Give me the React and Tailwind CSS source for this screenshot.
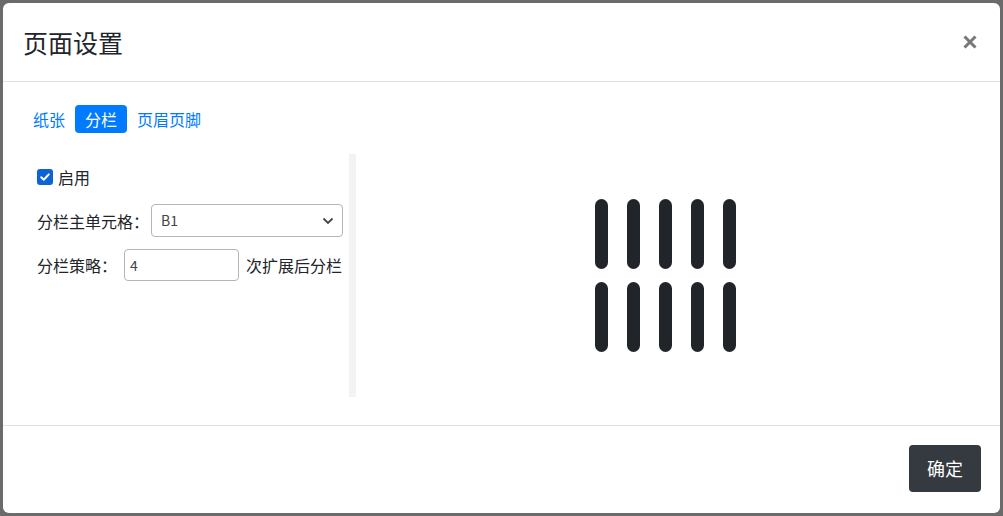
const FONT = {
  fontFamily: '"Noto Sans CJK SC", "Noto Sans", "Liberation Sans", sans-serif',
};

function ColumnsPreview() {
  const cols = [0, 1, 2, 3, 4];
  return (
    <div className="flex flex-col gap-[13px]">
      {[0, 1].map((row) => (
        <div key={row} className="flex gap-[19px]">
          {cols.map((c) => (
            <div key={c} className="w-[13px] h-[70px] rounded-full bg-[#212529]" />
          ))}
        </div>
      ))}
    </div>
  );
}

export default function App() {
  return (
    <div className="w-[1003px] h-[516px] bg-[#6b6b6b] pt-[3px] px-[3px] overflow-hidden" style={FONT}>
      <div className="w-[997px] h-[510px] bg-white rounded-md flex flex-col text-[#212529]">
        {/* Header */}
        <div className="h-[79px] flex items-center justify-between pl-[20px] pr-[23px] border-b border-[#dee2e6]">
          <h4 className="text-[25px] leading-none">页面设置</h4>
          <button className="w-[14px] h-[14px] -mt-[1px]">
            <svg width="14" height="14" viewBox="0 0 14 14">
              <path d="M1.5 1.5 L12.5 12.5 M12.5 1.5 L1.5 12.5" stroke="#777" strokeWidth="3" />
            </svg>
          </button>
        </div>

        {/* Body */}
        <div className="flex-1 px-[20px] pt-[23px] pb-[28px] flex flex-col">
          <div className="flex text-[16px] text-[#007bff]">
            <span className="h-[28px] px-[10px] flex items-center">纸张</span>
            <span className="h-[28px] px-[10px] flex items-center rounded bg-[#007bff] text-white">分栏</span>
            <span className="h-[28px] px-[10px] flex items-center">页眉页脚</span>
          </div>

          <div className="mt-[21px] flex flex-1">
            <div className="w-[326px] pl-[14px] pt-[14px] flex flex-col text-[16px]">
              <label className="flex items-center h-[18px] gap-[5px]">
                <span className="w-[16px] h-[16px] rounded-[3px] bg-[#0b63d6] flex items-center justify-center">
                  <svg width="12" height="12" viewBox="0 0 12 12">
                    <path d="M2.2 6.3 L4.8 8.8 L9.8 3.4" fill="none" stroke="white" strokeWidth="2" strokeLinecap="round" strokeLinejoin="round" />
                  </svg>
                </span>
                启用
              </label>

              <div className="flex items-center mt-[18px]">
                <span className="w-[114px]">分栏主单元格：</span>
                <div className="w-[192px] h-[33px] border border-[#b5b5b5] rounded flex items-center justify-between pl-[9px] pr-[8px] text-[14px] text-[#444]">
                  <span>B1</span>
                  <svg width="12" height="8" viewBox="0 0 12 8">
                    <path d="M1.5 1.5 L6 6 L10.5 1.5" fill="none" stroke="#444" strokeWidth="1.8" />
                  </svg>
                </div>
              </div>

              <div className="flex items-center mt-[12px]">
                <span className="w-[87px]">分栏策略：</span>
                <div className="w-[115px] h-[32px] border border-[#b5b5b5] rounded flex items-center pl-[5px] text-[14px] text-[#444]">
                  4
                </div>
                <span className="ml-[7px]">次扩展后分栏</span>
              </div>
            </div>

            <div className="w-[7px] bg-[#f3f3f3]" />

            <div className="flex-1 flex items-center justify-center pr-[6px]">
              <ColumnsPreview />
            </div>
          </div>
        </div>

        {/* Footer */}
        <div className="h-[88px] border-t border-[#dee2e6] flex items-center justify-end pr-[19px] pb-[2px]">
          <button className="h-[47px] w-[72px] rounded bg-[#343a40] text-white text-[18px]">确定</button>
        </div>
      </div>
    </div>
  );
}
